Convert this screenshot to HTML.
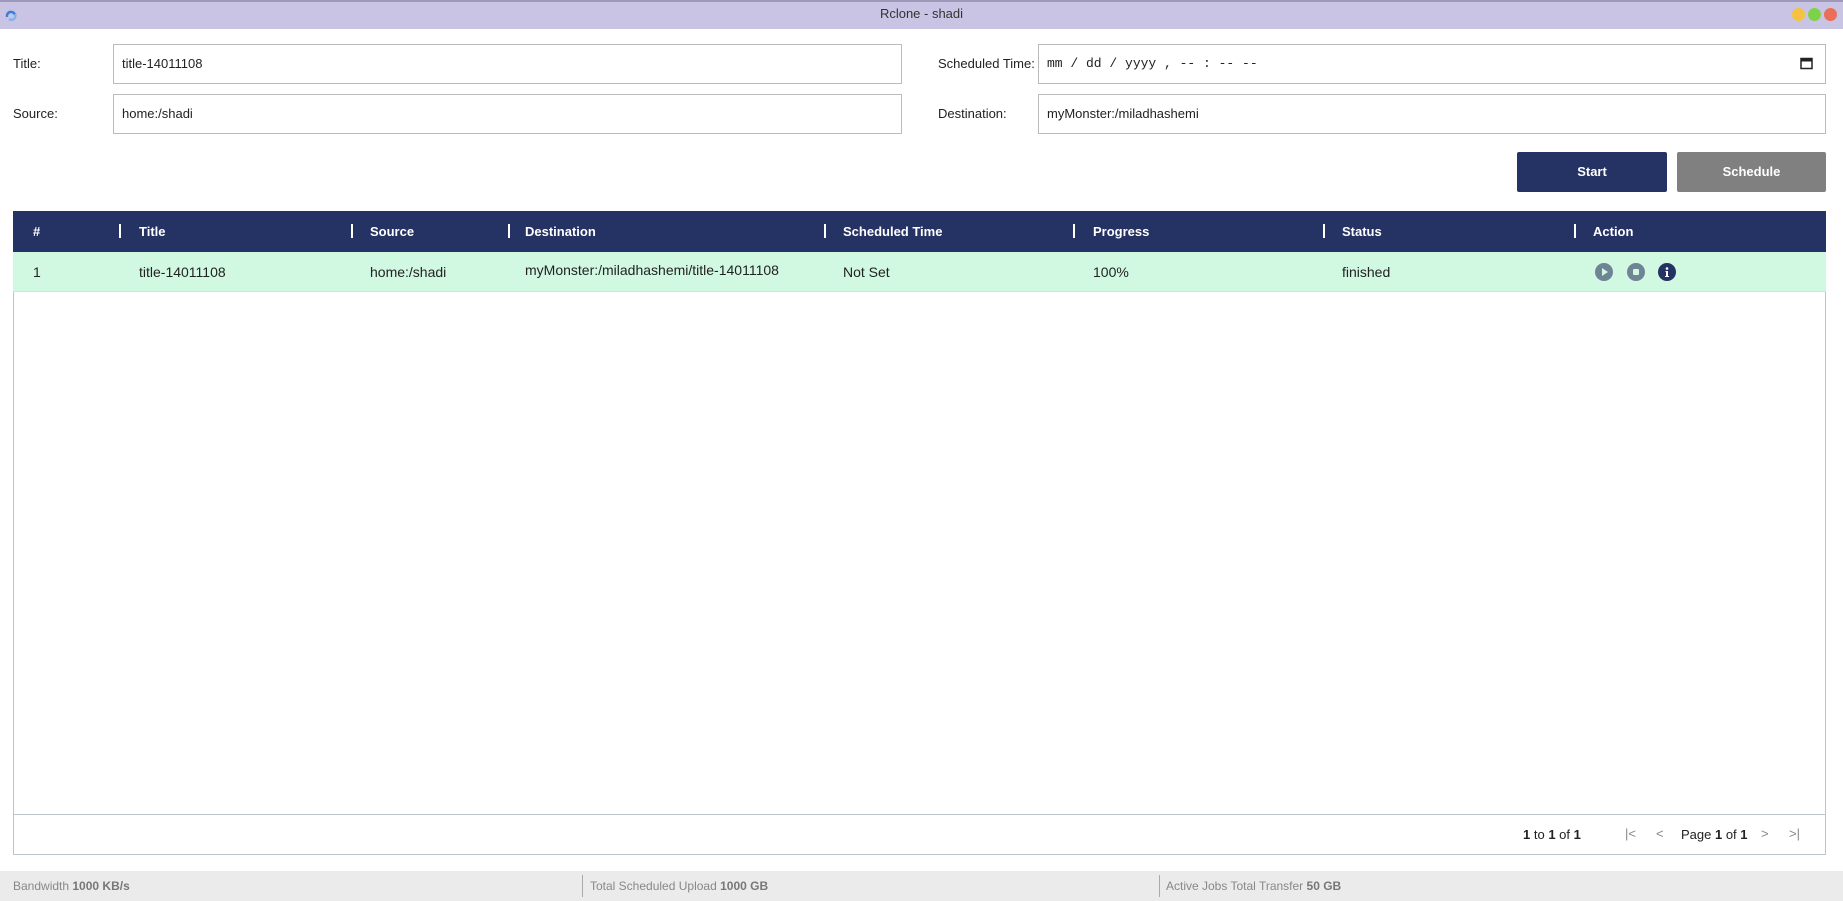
<!DOCTYPE html>
<html><head><meta charset="utf-8"><style>
*{box-sizing:border-box;margin:0;padding:0}
body{width:1843px;height:901px;position:relative;background:#fff;font-family:"Liberation Sans",sans-serif;color:#222;overflow:hidden}
.a{position:absolute}
.tb{left:0;top:0;width:1843px;height:29px;background:#c9c4e4;border-top:2px solid #9e99b8}
.lbl{font-size:13px;color:#222}
.inp{border:1px solid #bbb;height:40px;font-size:13px;padding-left:8px;line-height:38px;background:#fff}
.hd{left:13px;top:211px;width:1813px;height:41px;background:#253264;color:#fff;font-weight:bold;font-size:13px}
.hd span,.rw span{position:absolute;top:0;line-height:41px}
.hd i{position:absolute;top:13px;width:2px;height:14px;background:#fff}
.rw{left:13px;top:252px;width:1813px;height:40px;background:#d1f8e0;font-size:14px;border-bottom:1px solid #ddd}
.ic{position:absolute;top:11px;width:18px;height:18px;border-radius:50%}
.sb{left:0;top:871px;width:1843px;height:30px;background:#ebebeb;font-size:12px;color:#888;line-height:30px}
.sb b{color:#777}
</style></head><body>
<div class="a tb"></div>
<svg class="a" style="left:4px;top:8px" width="14" height="14"><path d="M3 9a4 4 0 0 1 8-2" stroke="#3b7dd8" stroke-width="2.5" fill="none"/><path d="M11 6a4 4 0 0 1-6 5" stroke="#7fb3f0" stroke-width="2.5" fill="none"/></svg>
<div class="a" style="left:0;width:1843px;top:6px;text-align:center;font-size:13px;color:#333">Rclone - shadi</div>
<div class="a" style="left:1792px;top:8px;width:13px;height:13px;border-radius:50%;background:#f5c242"></div>
<div class="a" style="left:1808px;top:8px;width:13px;height:13px;border-radius:50%;background:#7dd24a"></div>
<div class="a" style="left:1824px;top:8px;width:13px;height:13px;border-radius:50%;background:#ea6f5a"></div>

<div class="a lbl" style="left:13px;top:56px">Title:</div>
<div class="a inp" style="left:113px;top:44px;width:789px">title-14011108</div>
<div class="a lbl" style="left:13px;top:106px">Source:</div>
<div class="a inp" style="left:113px;top:94px;width:789px">home:/shadi</div>
<div class="a lbl" style="left:938px;top:56px">Scheduled Time:</div>
<div class="a inp" style="left:1038px;top:44px;width:788px;font-family:'Liberation Mono',monospace;font-size:13px">mm / dd / yyyy ,  -- : --  --</div>
<svg class="a" style="left:1800px;top:56px" width="13" height="14"><rect x="1" y="2.5" width="11" height="10" fill="none" stroke="#222" stroke-width="1.5"/><rect x="1" y="2.5" width="11" height="3" fill="#222"/></svg>
<div class="a lbl" style="left:938px;top:106px">Destination:</div>
<div class="a inp" style="left:1038px;top:94px;width:788px">myMonster:/miladhashemi</div>
<div class="a" style="left:1517px;top:152px;width:150px;height:40px;background:#253264;color:#fff;font-weight:bold;font-size:13px;text-align:center;line-height:40px;border-radius:2px">Start</div>
<div class="a" style="left:1677px;top:152px;width:149px;height:40px;background:#808080;color:#fff;font-weight:bold;font-size:13px;text-align:center;line-height:40px;border-radius:2px">Schedule</div>

<div class="a" style="left:13px;top:211px;width:1813px;height:644px;border:1px solid #bcc5cc"></div>
<div class="a hd">
<span style="left:20px">#</span><i style="left:106px"></i>
<span style="left:126px">Title</span><i style="left:338px"></i>
<span style="left:357px">Source</span><i style="left:495px"></i>
<span style="left:512px">Destination</span><i style="left:811px"></i>
<span style="left:830px">Scheduled Time</span><i style="left:1060px"></i>
<span style="left:1080px">Progress</span><i style="left:1310px"></i>
<span style="left:1329px">Status</span><i style="left:1561px"></i>
<span style="left:1580px">Action</span>
</div>
<div class="a rw">
<span style="left:20px">1</span>
<span style="left:126px">title-14011108</span>
<span style="left:357px">home:/shadi</span>
<span style="left:512px;top:-2px">myMonster:/miladhashemi/title-14011108</span>
<span style="left:830px">Not Set</span>
<span style="left:1080px">100%</span>
<span style="left:1329px">finished</span>
<div class="ic" style="left:1582px;background:#6f8494"><svg width="18" height="18"><path d="M7 5L13 9L7 13Z" fill="#d1f8e0"/></svg></div>
<div class="ic" style="left:1614px;background:#6f8494"><svg width="18" height="18"><rect x="6" y="6" width="6" height="6" rx="1" fill="#d1f8e0"/></svg></div>
<div class="ic" style="left:1645px;background:#253264"><svg width="18" height="18"><circle cx="9" cy="5.5" r="1.3" fill="#fff"/><path d="M7.5 8h2.5v5h1v1h-4v-1h1v-4h-0.5z" fill="#fff"/></svg></div>
</div>
<div class="a" style="left:13px;top:814px;width:1813px;height:1px;background:#bcc5cc"></div>
<div class="a" style="left:1523px;top:827px;font-size:13px;color:#222"><b>1</b> to <b>1</b> of <b>1</b></div>
<div class="a" style="left:1625px;top:826px;font-size:13px;color:#888">|&lt;</div>
<div class="a" style="left:1656px;top:826px;font-size:13px;color:#888">&lt;</div>
<div class="a" style="left:1681px;top:827px;font-size:13px;color:#222">Page <b>1</b> of <b>1</b></div>
<div class="a" style="left:1761px;top:826px;font-size:13px;color:#888">&gt;</div>
<div class="a" style="left:1789px;top:826px;font-size:13px;color:#888">&gt;|</div>

<div class="a sb">
<span class="a" style="left:13px">Bandwidth <b>1000 KB/s</b></span>
<span class="a" style="left:582px;top:4px;width:1px;height:22px;background:#aaa"></span>
<span class="a" style="left:590px">Total Scheduled Upload <b>1000 GB</b></span>
<span class="a" style="left:1159px;top:4px;width:1px;height:22px;background:#aaa"></span>
<span class="a" style="left:1166px">Active Jobs Total Transfer <b>50 GB</b></span>
</div>
</body></html>
